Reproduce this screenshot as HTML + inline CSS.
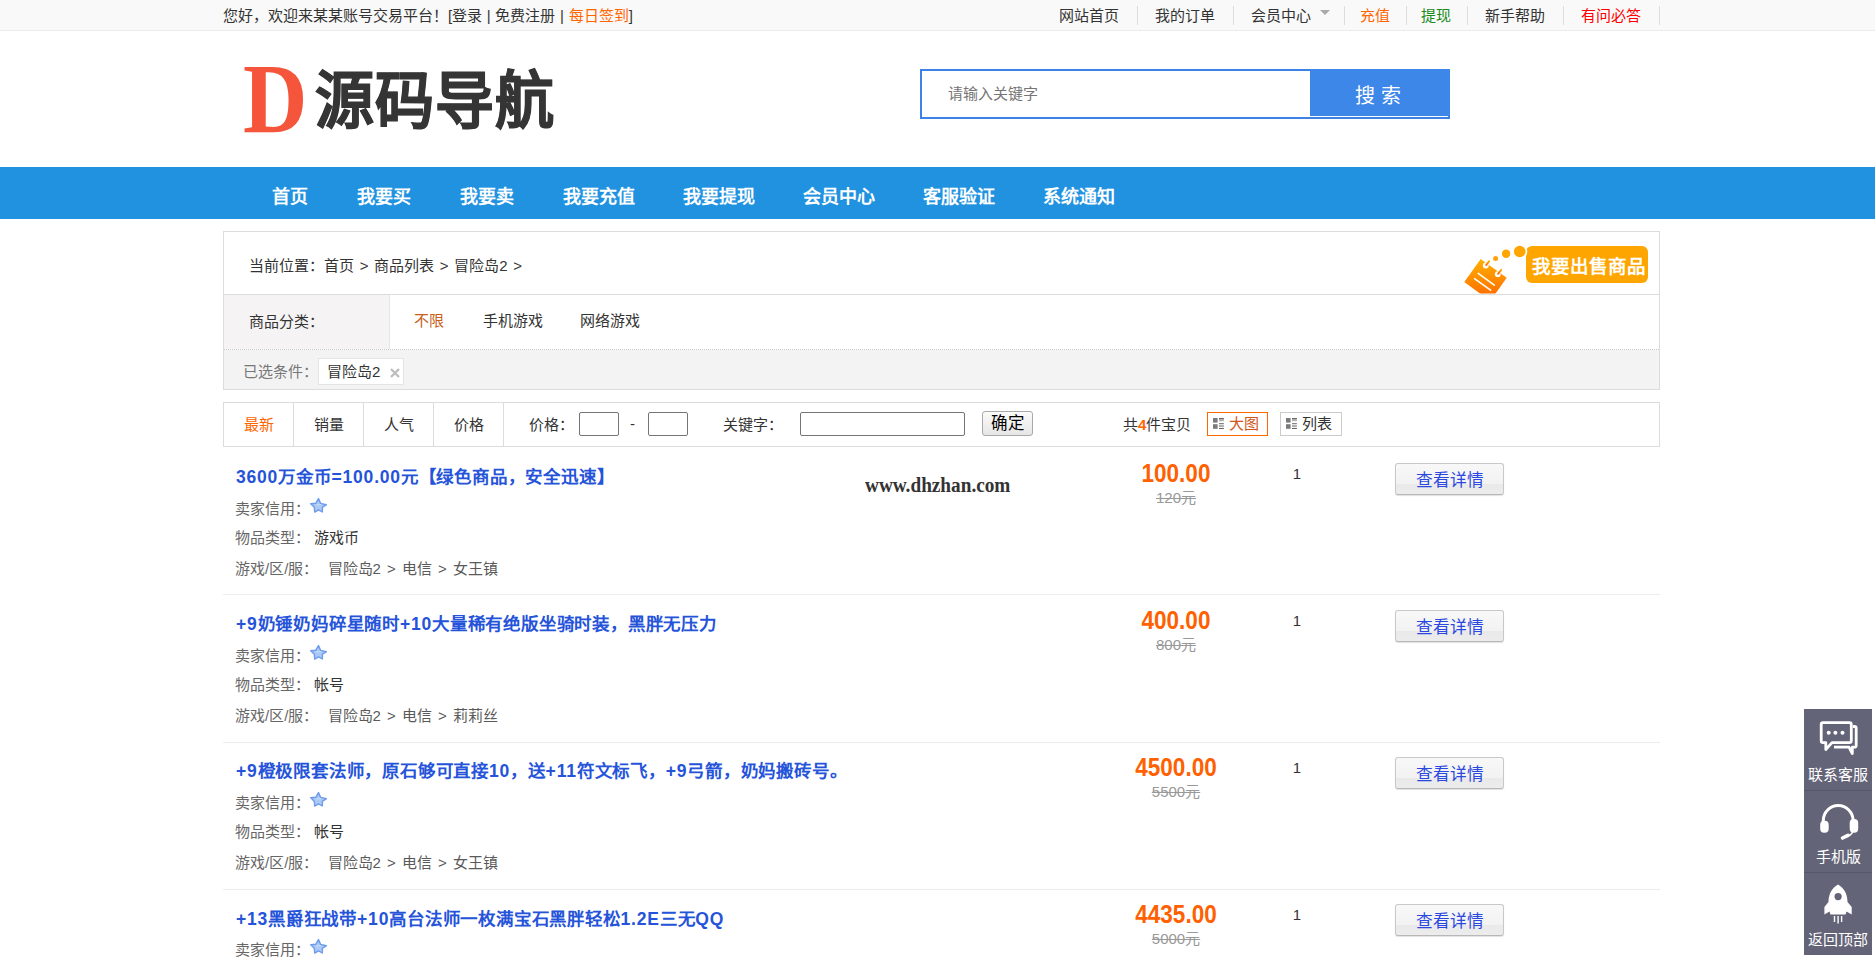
<!DOCTYPE html>
<html lang="zh-CN">
<head>
<meta charset="utf-8">
<title>商品列表</title>
<style>
*{margin:0;padding:0;box-sizing:border-box;}
html,body{width:1875px;height:969px;overflow:hidden;background:#fff;}
body{font-family:"Liberation Sans",sans-serif;font-size:15px;color:#333;position:relative;white-space:nowrap;}
.abs{position:absolute;white-space:nowrap;}
.topbar{position:absolute;left:0;top:0;width:1875px;height:31px;background:#f9f9f9;border-bottom:1px solid #ececec;}
.topbar .welcome{position:absolute;left:223px;top:1px;line-height:30px;word-spacing:0.5px;}
.topbar .welcome .og{color:#f60;}
.toplinks{position:absolute;left:0;top:0;}
.toplinks span{position:absolute;top:1px;line-height:30px;}
.toplinks i{position:absolute;top:6px;width:1px;height:19px;background:#ddd;}
.tri{position:absolute;left:1320px;top:10px;width:0;height:0;border-left:5px solid transparent;border-right:5px solid transparent;border-top:5px solid #aaa;}

.logoD{position:absolute;left:243px;top:48.5px;font-family:"Liberation Serif",serif;font-weight:bold;font-size:99px;line-height:99px;color:#f5553a;transform:scaleX(0.9);transform-origin:0 0;}
.logoT{position:absolute;left:315px;top:65px;font-family:"Liberation Serif",serif;font-weight:900;font-size:59px;line-height:70px;color:#353535;letter-spacing:1px;transform:scaleY(1.05);-webkit-text-stroke:0.8px #353535;transform-origin:0 0;}

.search{position:absolute;left:920px;top:69px;width:530px;height:50px;border:2px solid #3b83e6;background:#fff;}
.search .ph{position:absolute;left:26px;top:0;line-height:46px;color:#757575;font-size:15px;}
.search .btn{position:absolute;left:388px;top:-2px;width:140px;height:47px;background:#3d87e8;color:#fff;font-size:20px;line-height:54px;text-align:center;letter-spacing:6px;text-indent:2px;}

.nav{position:absolute;left:0;top:167px;width:1875px;height:52px;background:#2092e0;}
.nav span{position:absolute;top:4px;line-height:52px;color:#fff;font-weight:bold;font-size:18px;}

.crumb{position:absolute;left:223px;top:231px;width:1437px;height:159px;border:1px solid #dcdcdc;background:#fff;}
.crumb .row1{position:absolute;left:0;top:0;width:1435px;height:63px;border-bottom:1px solid #dcdcdc;}
.crumb > svg{clip-path:inset(0 0 0.5px 0);}
.crumb .row2{position:absolute;left:0;top:63px;width:1435px;height:55px;border-bottom:1px dotted #c8c8c8;}
.crumb .row2 .lab{position:absolute;left:0;top:0;width:166px;height:54px;background:#f5f3f3;border-right:1px solid #e6e6e6;}
.crumb .row3{position:absolute;left:0;top:118px;width:1435px;height:39px;background:#f3f3f3;}
.tag{position:absolute;left:94px;top:8px;width:86px;height:27px;border:1px solid #e4e4e4;background:#fff;}
.sell{position:absolute;left:1302px;top:14px;width:122px;height:37px;background:#ffa500;border-radius:6px;color:#fff;font-weight:bold;font-size:18.5px;line-height:41px;text-align:center;text-indent:3px;}

.sortbar{position:absolute;left:223px;top:402px;width:1437px;height:45px;border:1px solid #dcdcdc;background:#fff;}
.sortbar .tab{position:absolute;top:0;width:70px;height:43px;border-right:1px solid #dcdcdc;line-height:43px;text-align:center;}
.inp{position:absolute;border:1px solid #767676;border-radius:2px;background:#fff;}
.okbtn{position:absolute;left:758px;top:8px;width:51px;height:25px;border:1px solid #a9a9a9;border-radius:3px;background:linear-gradient(#fbfbfb,#e6e6e6);font-size:16.5px;line-height:23px;text-align:center;color:#000;}
.vbtn{position:absolute;top:9px;height:24px;border:1px solid #ccc;background:#fff;line-height:22px;padding-left:21px;}
.vbtn svg{position:absolute;left:5px;top:5px;}

.item{position:absolute;left:223px;width:1437px;border-bottom:1px solid #ececec;}
.item .t{position:absolute;left:13px;top:15px;font-size:17.5px;letter-spacing:0.8px;font-weight:bold;color:#2553d9;line-height:30px;}
.item .l{position:absolute;left:12px;color:#666;line-height:30px;}
.item .l.v{color:#333;}
.item .price{position:absolute;left:903px;width:100px;text-align:center;top:11px;color:#ff6000;font-weight:bold;font-size:22.5px;line-height:30px;transform:scaleY(1.15);transform-origin:50% 7px;}
.item .old{position:absolute;left:903px;width:100px;text-align:center;top:41px;color:#999;text-decoration:line-through;font-size:15px;line-height:20px;}
.item .qty{position:absolute;left:1064px;top:14px;width:20px;text-align:center;line-height:25px;color:#333;}
.item .dbtn{position:absolute;left:1172px;top:16px;width:109px;height:32px;border:1px solid #c8c8c8;border-bottom-color:#b8b8b8;border-radius:3px;background:linear-gradient(#f8f8f8 0%,#f2f2f2 65%,#e9e9e9 66%,#ececec 100%);box-shadow:0 1px 1px rgba(0,0,0,.12);color:#2a48e0;font-size:16.7px;line-height:33px;text-align:center;}
.star{position:absolute;}
.wm{position:absolute;left:865px;top:474px;font-family:"Liberation Serif",serif;font-weight:bold;font-size:20px;color:#333;transform:scaleX(0.962);transform-origin:0 0;}

.side{position:absolute;left:1804px;top:709px;width:68px;height:246px;background:#646478;}
.side .sec{position:absolute;left:0;width:68px;height:82px;border-bottom:1px solid #55576a;color:#fff;text-align:center;}
.side .sec span{position:absolute;left:0;width:68px;text-align:center;font-size:15px;line-height:18px;}
</style>
</head>
<body>

<div class="topbar">
  <div class="welcome">您好，欢迎来某某账号交易平台！[登录 | 免费注册 | <span class="og">每日签到</span>]</div>
</div>
<div class="toplinks">
  <span style="left:1059px">网站首页</span><i style="left:1137px"></i>
  <span style="left:1155px">我的订单</span><i style="left:1233px"></i>
  <span style="left:1251px">会员中心</span><div class="tri"></div><i style="left:1344px"></i>
  <span style="left:1360px;color:#f60">充值</span><i style="left:1406px"></i>
  <span style="left:1421px;color:#1a8a1a">提现</span><i style="left:1467px"></i>
  <span style="left:1485px">新手帮助</span><i style="left:1563px"></i>
  <span style="left:1581px;color:#f00">有问必答</span><i style="left:1659px"></i>
</div>

<div class="logoD">D</div>
<div class="logoT">源码导航</div>

<div class="search">
  <div class="ph">请输入关键字</div>
  <div class="btn">搜索</div>
</div>

<div class="nav">
  <span style="left:272px">首页</span>
  <span style="left:357px">我要买</span>
  <span style="left:460px">我要卖</span>
  <span style="left:563px">我要充值</span>
  <span style="left:683px">我要提现</span>
  <span style="left:803px">会员中心</span>
  <span style="left:923px">客服验证</span>
  <span style="left:1043px">系统通知</span>
</div>

<div class="crumb">
  <div class="row1">
    <div class="abs" style="left:25px;top:2px;line-height:63px;word-spacing:1.5px">当前位置：首页 &gt; 商品列表 &gt; 冒险岛2 &gt;</div>
  </div>
  <div class="row2">
    <div class="lab"><div class="abs" style="left:25px;top:0;line-height:54px">商品分类：</div></div>
    <div class="abs" style="left:190px;top:-1px;line-height:54px;color:#c8601a">不限</div>
    <div class="abs" style="left:259px;top:-1px;line-height:54px">手机游戏</div>
    <div class="abs" style="left:356px;top:-1px;line-height:54px">网络游戏</div>
  </div>
  <div class="row3">
    <div class="abs" style="left:19px;top:2px;line-height:39px;color:#777">已选条件：</div>
    <div class="tag"><div class="abs" style="left:8px;top:0;line-height:25px">冒险岛2</div><svg style="position:absolute;left:70.5px;top:9px" width="10" height="10" viewBox="0 0 10 10"><path d="M1,1 L9,9 M9,1 L1,9" stroke="#bdbdbd" stroke-width="2.3"/></svg></div>
  </div>
  <div class="sell">我要出售商品</div>
  <svg style="position:absolute;left:1231px;top:8px" width="80" height="54" viewBox="0 0 80 54">
    <defs><linearGradient id="tg" x1="0" y1="0" x2="0" y2="1"><stop offset="0" stop-color="#ffb200"/><stop offset="1" stop-color="#ff6400"/></linearGradient></defs>
    <path d="M25.7,18.9 L51.7,37.8 L35.3,61 L9.3,42.1 Z" fill="url(#tg)"/>
    <circle cx="30.8" cy="25.5" r="2.9" fill="#fff"/><path d="M31.2,25 L34.2,21.2" stroke="url(#tg)" stroke-width="2" stroke-linecap="round"/>
    <circle cx="42.8" cy="34.2" r="2.9" fill="#fff"/><path d="M43.2,33.7 L46.2,29.9" stroke="url(#tg)" stroke-width="2" stroke-linecap="round"/>
    <path d="M23.2,33.4 L39.3,45.2 M19.5,38.7 L35.6,50.2" stroke="#fff" stroke-width="1.6" stroke-linecap="round"/>
    <circle cx="40.6" cy="18.6" r="2.5" fill="#ffa20a"/>
    <circle cx="51.1" cy="13.7" r="4.2" fill="#ffa500"/>
    <circle cx="64.7" cy="11.5" r="7.6" fill="#fff"/>
    <circle cx="64.7" cy="11.5" r="5.8" fill="#ffa500"/>
  </svg>
</div>

<div class="sortbar">
  <div class="tab" style="left:0;color:#f60">最新</div>
  <div class="tab" style="left:70px">销量</div>
  <div class="tab" style="left:140px">人气</div>
  <div class="tab" style="left:210px">价格</div>
  <div class="abs" style="left:305px;top:0;line-height:43px">价格：</div>
  <div class="inp" style="left:355px;top:9px;width:40px;height:24px"></div>
  <div class="abs" style="left:406px;top:0;line-height:41px">-</div>
  <div class="inp" style="left:424px;top:9px;width:40px;height:24px"></div>
  <div class="abs" style="left:499px;top:0;line-height:43px">关键字：</div>
  <div class="inp" style="left:576px;top:9px;width:165px;height:24px"></div>
  <div class="okbtn">确定</div>
  <div class="abs" style="left:899px;top:0;line-height:43px">共<b style="color:#f60">4</b>件宝贝</div>
  <div class="vbtn" style="left:983px;width:61px;border-color:#f60;color:#d2561a"><svg width="11" height="11" viewBox="0 0 11 11"><rect x="0" y="0" width="4.6" height="4.6" fill="#7a7a7a"/><rect x="0" y="6.2" width="4.6" height="4.6" fill="#7a7a7a"/><rect x="6" y="1" width="4.9" height="2.2" fill="#b0b0b0"/><rect x="6" y="7" width="4.9" height="2.2" fill="#b0b0b0"/><rect x="6" y="0" width="4.9" height="1" fill="#666"/><rect x="6" y="5.2" width="4.9" height="1" fill="#666"/><rect x="6" y="10" width="4.9" height="1" fill="#666"/></svg>大图</div>
  <div class="vbtn" style="left:1056px;width:62px;"><svg width="11" height="11" viewBox="0 0 11 11"><rect x="0" y="0" width="4.6" height="4.6" fill="#7a7a7a"/><rect x="0" y="6.2" width="4.6" height="4.6" fill="#7a7a7a"/><rect x="6" y="1" width="4.9" height="2.2" fill="#b0b0b0"/><rect x="6" y="7" width="4.9" height="2.2" fill="#b0b0b0"/><rect x="6" y="0" width="4.9" height="1" fill="#666"/><rect x="6" y="5.2" width="4.9" height="1" fill="#666"/><rect x="6" y="10" width="4.9" height="1" fill="#666"/></svg>列表</div>
</div>

<div class="item" style="top:447px;height:148px">
  <div class="t">3600万金币=100.00元【绿色商品，安全迅速】</div>
  <div class="l" style="top:47px">卖家信用：</div><svg class="star" style="left:82px;top:47px" width="27" height="22" viewBox="0 0 27 22"><path d="M13.5,4.6 L15.6,9.4 L21.3,10.8 L17.5,13.2 L17.3,18 L13.5,15.8 L9.7,18.1 L9.3,13.2 L5.7,9.7 L10.7,9.3 Z" fill="#abc9f4" stroke="#6e9ced" stroke-width="1.4" stroke-linejoin="round"/><path d="M11.5,11 L16,10.5" stroke="#c8e4f8" stroke-width="1.2"/></svg>
  <div class="l" style="top:76px">物品类型：</div><div class="l v" style="top:76px;left:91px">游戏币</div>
  <div class="l" style="top:107px">游戏/区/服：</div><div class="l v" style="top:107px;left:104.5px;word-spacing:2px;color:#5a5a5a">冒险岛2 &gt; 电信 &gt; 女王镇</div>
  <div class="price">100.00</div>
  <div class="old">120元</div>
  <div class="qty">1</div>
  <div class="dbtn">查看详情</div>
</div>
<div class="item" style="top:594px;height:149px">
  <div class="t">+9奶锤奶妈碎星随时+10大量稀有绝版坐骑时装，黑胖无压力</div>
  <div class="l" style="top:47px">卖家信用：</div><svg class="star" style="left:82px;top:47px" width="27" height="22" viewBox="0 0 27 22"><path d="M13.5,4.6 L15.6,9.4 L21.3,10.8 L17.5,13.2 L17.3,18 L13.5,15.8 L9.7,18.1 L9.3,13.2 L5.7,9.7 L10.7,9.3 Z" fill="#abc9f4" stroke="#6e9ced" stroke-width="1.4" stroke-linejoin="round"/><path d="M11.5,11 L16,10.5" stroke="#c8e4f8" stroke-width="1.2"/></svg>
  <div class="l" style="top:76px">物品类型：</div><div class="l v" style="top:76px;left:91px">帐号</div>
  <div class="l" style="top:107px">游戏/区/服：</div><div class="l v" style="top:107px;left:104.5px;word-spacing:2px;color:#5a5a5a">冒险岛2 &gt; 电信 &gt; 莉莉丝</div>
  <div class="price">400.00</div>
  <div class="old">800元</div>
  <div class="qty">1</div>
  <div class="dbtn">查看详情</div>
</div>
<div class="item" style="top:741px;height:149px">
  <div class="t">+9橙极限套法师，原石够可直接10，送+11符文标飞，+9弓箭，奶妈搬砖号。</div>
  <div class="l" style="top:47px">卖家信用：</div><svg class="star" style="left:82px;top:47px" width="27" height="22" viewBox="0 0 27 22"><path d="M13.5,4.6 L15.6,9.4 L21.3,10.8 L17.5,13.2 L17.3,18 L13.5,15.8 L9.7,18.1 L9.3,13.2 L5.7,9.7 L10.7,9.3 Z" fill="#abc9f4" stroke="#6e9ced" stroke-width="1.4" stroke-linejoin="round"/><path d="M11.5,11 L16,10.5" stroke="#c8e4f8" stroke-width="1.2"/></svg>
  <div class="l" style="top:76px">物品类型：</div><div class="l v" style="top:76px;left:91px">帐号</div>
  <div class="l" style="top:107px">游戏/区/服：</div><div class="l v" style="top:107px;left:104.5px;word-spacing:2px;color:#5a5a5a">冒险岛2 &gt; 电信 &gt; 女王镇</div>
  <div class="price">4500.00</div>
  <div class="old">5500元</div>
  <div class="qty">1</div>
  <div class="dbtn">查看详情</div>
</div>
<div class="item" style="top:888px;height:148px">
  <div class="t" style="top:16px">+13黑爵狂战带+10高台法师一枚满宝石黑胖轻松1.2E三无QQ</div>
  <div class="l" style="top:47px">卖家信用：</div><svg class="star" style="left:82px;top:47px" width="27" height="22" viewBox="0 0 27 22"><path d="M13.5,4.6 L15.6,9.4 L21.3,10.8 L17.5,13.2 L17.3,18 L13.5,15.8 L9.7,18.1 L9.3,13.2 L5.7,9.7 L10.7,9.3 Z" fill="#abc9f4" stroke="#6e9ced" stroke-width="1.4" stroke-linejoin="round"/><path d="M11.5,11 L16,10.5" stroke="#c8e4f8" stroke-width="1.2"/></svg>
  <div class="l" style="top:76px">物品类型：</div><div class="l v" style="top:76px;left:91px">帐号</div>
  <div class="l" style="top:107px">游戏/区/服：</div><div class="l v" style="top:107px;left:104.5px;word-spacing:2px;color:#5a5a5a">冒险岛2 &gt; 电信 &gt; 女王镇</div>
  <div class="price">4435.00</div>
  <div class="old">5000元</div>
  <div class="qty">1</div>
  <div class="dbtn">查看详情</div>
</div>
<div class="wm">www.dhzhan.com</div>
<div class="side">
  <div class="sec" style="top:0"><svg style="position:absolute;left:0;top:0" width="68" height="56" viewBox="0 0 68 56">
    <path d="M30,38.2 H45 L48.3,44.5 V38.2 H50.5 Q52.2,38.2 52.2,36.5 V19 Q52.2,17.5 50.5,17.5 H49" fill="none" stroke="#fff" stroke-width="2.8" stroke-linejoin="round"/>
    <path d="M19,13.6 H45.5 Q47.3,13.6 47.3,15.4 V31.8 Q47.3,33.6 45.5,33.6 H28 L21.8,40.5 V33.6 H19 Q17.2,33.6 17.2,31.8 V15.4 Q17.2,13.6 19,13.6 Z" fill="none" stroke="#fff" stroke-width="2.8" stroke-linejoin="round"/>
    <circle cx="24.7" cy="23.8" r="2" fill="#fff"/><circle cx="31.4" cy="23.8" r="2" fill="#fff"/><circle cx="38.5" cy="23.8" r="2" fill="#fff"/>
  </svg><span style="top:57px">联系客服</span></div>
  <div class="sec" style="top:82px"><svg style="position:absolute;left:0;top:0" width="68" height="56" viewBox="0 0 68 56">
    <path d="M19.3,31 V29.5 A14.9,14.9 0 0 1 49.1,29.5 V31" fill="none" stroke="#fff" stroke-width="3"/>
    <rect x="16.2" y="29.8" width="8.5" height="12" rx="4" fill="#fff"/>
    <rect x="45.7" y="28" width="8.5" height="13.8" rx="4" fill="#fff"/>
    <path d="M48.5,41 Q47.5,44 43,45.5" fill="none" stroke="#fff" stroke-width="1.6"/>
    <path d="M38.5,47 L44,44.3" fill="none" stroke="#fff" stroke-width="3.6" stroke-linecap="round"/>
  </svg><span style="top:57px">手机版</span></div>
  <div class="sec" style="top:164px;border-bottom:none"><svg style="position:absolute;left:0;top:0" width="68" height="56" viewBox="0 0 68 56">
    <path d="M34,11.5 C40,15 43.5,21 43.5,29 L47.7,34 V41.5 L42.5,38.5 L41.5,41.5 H26.5 L25.5,38.5 L20.4,41.5 V34 L24.5,29 C24.5,21 28,15 34,11.5 Z" fill="#fff"/>
    <circle cx="34.1" cy="23.6" r="3.6" fill="#646478"/>
    <path d="M30.5,43 V49 M34.1,43 V50.5 M37.6,43 V49" stroke="#fff" stroke-width="1.4"/>
  </svg><span style="top:58px">返回顶部</span></div>
</div>

</body>
</html>
